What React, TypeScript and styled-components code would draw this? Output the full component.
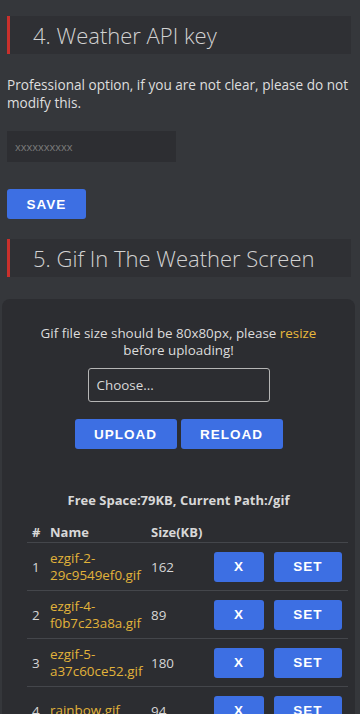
import styled, { createGlobalStyle } from "styled-components";

const Global = createGlobalStyle`
  body {
    margin: 0;
    background: #35373b;
    color: #dcdcdc;
    font-family: "Open Sans", "Noto Sans", sans-serif;
  }
`;

const Page = styled.div`
  display: flex;
  flex-direction: column;
  padding-top: 16px;
`;

const SectionTitle = styled.h2`
  margin: 0 9px 0 7px;
  height: 38px;
  display: flex;
  align-items: center;
  padding-left: 23px;
  background: #2f3034;
  border-left: 3px solid #c9302c;
  font-family: "Open Sans", sans-serif;
  font-weight: 300;
  font-size: 22px;
  color: #d2d2d2;
`;

const Note = styled.p`
  margin: 22px 7px 0;
  font-size: 13.6px;
  line-height: 18px;
  color: #dedede;
`;

const KeyInput = styled.input`
  box-sizing: border-box;
  margin: 19px 0 0 7px;
  width: 169px;
  height: 31px;
  border: none;
  outline: none;
  background: #2d2e32;
  padding: 0 8px;
  font-family: "Open Sans", sans-serif;
  font-size: 11px;
  color: #777;
  &::placeholder {
    color: #7a7a7a;
  }
`;

const Button = styled.button<{ $w: number }>`
  width: ${(p) => p.$w}px;
  height: 30px;
  border: none;
  border-radius: 3px;
  background: #3d6fe3;
  color: #fff;
  font-family: "Liberation Sans", Arial, sans-serif;
  font-weight: 700;
  font-size: 13.5px;
  letter-spacing: 1px;
  cursor: pointer;
`;

const SaveRow = styled.div`
  margin: 27px 0 20px 7px;
`;

const Card = styled.div`
  margin: 22px 5px 0 2px;
  padding: 26px 0 30px;
  background: #2c2d31;
  border-radius: 8px 8px 0 0;
  display: flex;
  flex-direction: column;
  align-items: center;
`;

const Hint = styled.div`
  font-size: 13.4px;
  line-height: 17px;
  text-align: center;
  width: 280px;
  color: #dcdcdc;
`;

const Link = styled.span`
  color: #e8b93c;
`;

const FileBox = styled.div`
  box-sizing: border-box;
  margin-top: 9px;
  width: 182px;
  height: 34px;
  border: 1px solid #b5b5b5;
  border-radius: 3px;
  display: flex;
  align-items: center;
  padding-left: 8px;
  font-size: 13.4px;
  color: #d8d8d8;
`;

const ButtonRow = styled.div`
  display: flex;
  gap: 4px;
  margin-top: 17px;
`;

const Info = styled.div`
  margin-top: 42px;
  font-weight: 700;
  font-size: 13px;
  color: #d8d8d8;
`;

const Table = styled.table`
  align-self: flex-start;
  margin: 14px 0 0 25px;
  width: 321px;
  border-collapse: collapse;
  font-size: 13.4px;
  th {
    text-align: left;
    font-weight: 700;
    font-size: 13px;
    color: #d8d8d8;
    padding: 0 0 1px;
    height: 17px;
  }
  td {
    border-top: 1px solid #44464b;
    height: 47px;
    padding: 0;
    color: #d6d6d6;
  }
`;

const NumCell = styled.td`
  width: 18px;
  padding-left: 5px !important;
  text-align: left;
`;

const NameCell = styled.td`
  width: 101px;
  color: #e2b33a !important;
  line-height: 17px;
`;

const ActionCell = styled.td`
  text-align: right;
  white-space: nowrap;
  padding-right: 6px !important;
  button + button {
    margin-left: 10px;
  }
`;

const files = [
  { name: "ezgif-2-\n29c9549ef0.gif", size: 162 },
  { name: "ezgif-4-\nf0b7c23a8a.gif", size: 89 },
  { name: "ezgif-5-\na37c60ce52.gif", size: 180 },
  { name: "rainbow.gif", size: 94 },
];

export default function App() {
  return (
    <Page>
      <Global />
      <SectionTitle>4. Weather API key</SectionTitle>
      <Note>
        Professional option, if you are not clear, please do not modify this.
      </Note>
      <div>
        <KeyInput placeholder="xxxxxxxxxx" />
      </div>
      <SaveRow>
        <Button $w={79}>SAVE</Button>
      </SaveRow>
      <SectionTitle>5. Gif In The Weather Screen</SectionTitle>
      <Card>
        <Hint>
          Gif file size should be 80x80px, please <Link>resize</Link> before
          uploading!
        </Hint>
        <FileBox>Choose...</FileBox>
        <ButtonRow>
          <Button $w={102}>UPLOAD</Button>
          <Button $w={102}>RELOAD</Button>
        </ButtonRow>
        <Info>Free Space:79KB, Current Path:/gif</Info>
        <Table>
          <thead>
            <tr>
              <th style={{ paddingLeft: 5 }}>#</th>
              <th>Name</th>
              <th>Size(KB)</th>
              <th />
            </tr>
          </thead>
          <tbody>
            {files.map((f, i) => (
              <tr key={f.name}>
                <NumCell>{i + 1}</NumCell>
                <NameCell>
                  {f.name.split("\n").map((part) => (
                    <div key={part}>{part}</div>
                  ))}
                </NameCell>
                <td>{f.size}</td>
                <ActionCell>
                  <Button $w={50}>X</Button>
                  <Button $w={68}>SET</Button>
                </ActionCell>
              </tr>
            ))}
          </tbody>
        </Table>
      </Card>
    </Page>
  );
}
